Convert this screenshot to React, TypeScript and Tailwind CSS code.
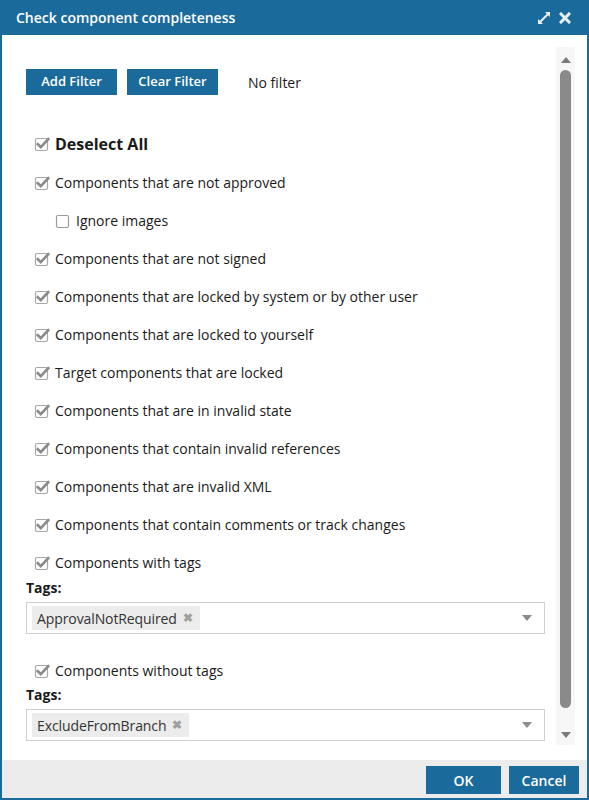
import React from "react";

const font = { fontFamily: '"Open Sans", "Noto Sans", sans-serif' };

function CheckIcon({ checked }: { checked: boolean }) {
  return (
    <svg width="16" height="16" viewBox="0 0 16 16" className="shrink-0">
      <rect x="1.5" y="2.5" width="12" height="12" rx="1.5" fill="#fff" stroke={checked ? "#a8a8a8" : "#9a9a9a"} strokeWidth="1.2" />
      {checked && (
        <path d="M3.8 8.2 L6.8 11.2 L14.2 3.2" fill="none" stroke="#8a8a8a" strokeWidth="2.6" strokeLinecap="square" strokeLinejoin="miter" />
      )}
    </svg>
  );
}

function Row({ label, checked = true, indent = false, bold = false, h = "h-[38px]" }: { label: string; checked?: boolean; indent?: boolean; bold?: boolean; h?: string }) {
  return (
    <div className={`flex items-center ${h} ${indent ? "pl-[29px]" : "pl-[8px]"}`}>
      <CheckIcon checked={checked} />
      <span className={`ml-[5px] mt-[-1px] text-[#1a1a1a] ${bold ? "text-[16px] font-bold" : "text-[14px]"}`}>{label}</span>
    </div>
  );
}

function TagSelect({ tag }: { tag: string }) {
  return (
    <div className="mt-[6px] h-[32px] w-[519px] border border-[#cfcfcf] flex items-center pl-[5px] pr-[12px]">
      <div className="h-[24px] bg-[#ececec] flex items-center pl-[5px] pr-[7px]">
        <span className="text-[14px] text-[#333] tracking-[-0.1px]">{tag}</span>
        <span className="ml-[6px] text-[12px] font-bold text-[#a0a0a0] leading-none">✖</span>
      </div>
      <div className="flex-1" />
      <svg width="10" height="6" viewBox="0 0 10 6"><path d="M0 0 L10 0 L5 6 Z" fill="#8c8c8c" /></svg>
    </div>
  );
}

export default function App() {
  return (
    <div style={font} className="w-[589px] h-[800px] bg-[#1b6a9c] flex flex-col px-[2px] pb-[2px]">
      <div className="h-[35px] flex items-center pl-[14px] pr-[16px] shrink-0">
        <span className="text-white text-[14px] font-semibold">Check component completeness</span>
        <div className="flex-1" />
        <svg width="14" height="14" viewBox="0 0 14 14" className="mr-[8px]">
          <path d="M8 1 H13 V6 L11.2 4.2 L4.2 11.2 L6 13 H1 V8 L2.8 9.8 L9.8 2.8 Z" fill="#e8f0f6" />
        </svg>
        <svg width="12" height="12" viewBox="0 0 12 12">
          <path d="M2 2 L10 10 M10 2 L2 10" stroke="#e8f0f6" strokeWidth="3" strokeLinecap="square" />
        </svg>
      </div>
      <div className="flex-1 bg-white flex min-h-0">
        <div className="pl-[24px] pt-[34px] w-[554px] shrink-0">
          <div className="flex items-center">
            <button className="h-[26px] w-[91px] bg-[#1b6a9c] text-white text-[13px] font-semibold">Add Filter</button>
            <button className="ml-[10px] h-[26px] w-[91px] bg-[#1b6a9c] text-white text-[13px] font-semibold">Clear Filter</button>
            <span className="ml-[30px] text-[14px] text-[#1a1a1a]">No filter</span>
          </div>
          <div className="mt-[29px]">
            <Row label="Deselect All" bold h="h-[40px]" />
            <Row label="Components that are not approved" />
            <Row label="Ignore images" checked={false} indent />
            <Row label="Components that are not signed" />
            <Row label="Components that are locked by system or by other user" />
            <Row label="Components that are locked to yourself" />
            <Row label="Target components that are locked" />
            <Row label="Components that are in invalid state" />
            <Row label="Components that contain invalid references" />
            <Row label="Components that are invalid XML" />
            <Row label="Components that contain comments or track changes" />
            <Row label="Components with tags" />
            <div className="mt-[-2px] mb-[1px] text-[14px] font-bold leading-[16px] text-[#1a1a1a]">Tags:</div>
            <TagSelect tag="ApprovalNotRequired" />
            <div className="mt-[18px]">
              <Row label="Components without tags" />
            </div>
            <div className="mt-[-3px] mb-[1px] text-[14px] font-bold leading-[16px] text-[#1a1a1a]">Tags:</div>
            <TagSelect tag="ExcludeFromBranch" />
          </div>
        </div>
        <div className="mt-[12px] mb-[15px] w-[19px] bg-[#f7f7f7] flex flex-col items-center">
          <svg width="10" height="6" viewBox="0 0 10 6" className="mt-[10px]"><path d="M0 6 L10 6 L5 0 Z" fill="#7a7a7a" /></svg>
          <div className="mt-[7px] w-[11px] flex-1 rounded-full bg-[#8a8a8a] mb-[24px]" />
          <svg width="10" height="6" viewBox="0 0 10 6" className="mb-[7px]"><path d="M0 0 L10 0 L5 6 Z" fill="#7a7a7a" /></svg>
        </div>
      </div>
      <div className="h-[38px] bg-[#ececec] flex items-start justify-end pt-[6px] pr-[8px] shrink-0">
        <button className="h-[28px] w-[75px] bg-[#1b6a9c] text-white text-[14px] font-semibold">OK</button>
        <button className="ml-[8px] h-[28px] w-[70px] bg-[#1b6a9c] text-white text-[14px] font-semibold">Cancel</button>
      </div>
    </div>
  );
}
